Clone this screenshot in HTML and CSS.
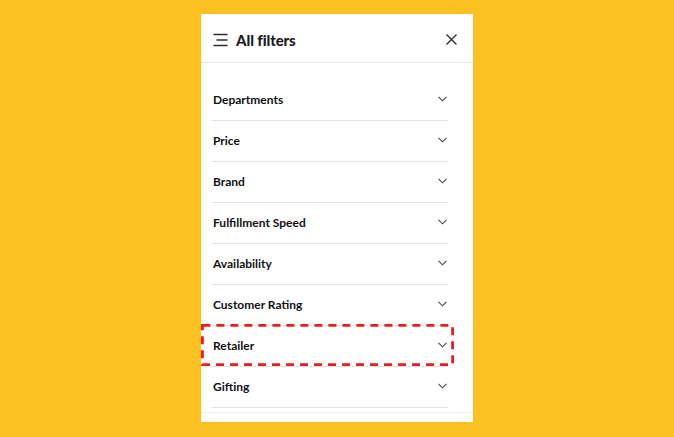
FILE: index.html
```html
<!DOCTYPE html>
<html lang="en">
<head>
    <meta charset="UTF-8">
    <meta name="viewport" content="width=device-width, initial-scale=1.0">
    <title>All filters</title>
    <link rel="stylesheet" href="styles.css">
</head>
<body>

<div class="panel">
    <header class="panel-header">
        <svg class="menu-icon" width="15" height="14" viewBox="0 0 15 14">
            <path d="M0.5 1.5H14.5M3.5 7H14.5M0.5 12.5H14.5" stroke="#2e2f32" stroke-width="1.3" fill="none"/>
        </svg>
        <h1>All filters</h1>
        <svg class="close-icon" width="11" height="11" viewBox="0 0 11 11">
            <path d="M0.5 0.5L10.5 10.5M10.5 0.5L0.5 10.5" stroke="#2e2f32" stroke-width="1.4" fill="none"/>
        </svg>
    </header>

    <ul class="filter-list">
        <li class="filter-row"><span>Departments</span><svg class="chevron" width="9" height="6" viewBox="0 0 9 6"><path d="M0.5 0.8L4.5 4.8L8.5 0.8" stroke="#46474a" stroke-width="1.1" fill="none"/></svg></li>
        <li class="filter-row"><span>Price</span><svg class="chevron" width="9" height="6" viewBox="0 0 9 6"><path d="M0.5 0.8L4.5 4.8L8.5 0.8" stroke="#46474a" stroke-width="1.1" fill="none"/></svg></li>
        <li class="filter-row"><span>Brand</span><svg class="chevron" width="9" height="6" viewBox="0 0 9 6"><path d="M0.5 0.8L4.5 4.8L8.5 0.8" stroke="#46474a" stroke-width="1.1" fill="none"/></svg></li>
        <li class="filter-row"><span>Fulfillment Speed</span><svg class="chevron" width="9" height="6" viewBox="0 0 9 6"><path d="M0.5 0.8L4.5 4.8L8.5 0.8" stroke="#46474a" stroke-width="1.1" fill="none"/></svg></li>
        <li class="filter-row"><span>Availability</span><svg class="chevron" width="9" height="6" viewBox="0 0 9 6"><path d="M0.5 0.8L4.5 4.8L8.5 0.8" stroke="#46474a" stroke-width="1.1" fill="none"/></svg></li>
        <li class="filter-row"><span>Customer Rating</span><svg class="chevron" width="9" height="6" viewBox="0 0 9 6"><path d="M0.5 0.8L4.5 4.8L8.5 0.8" stroke="#46474a" stroke-width="1.1" fill="none"/></svg></li>
        <li class="filter-row"><span>Retailer</span><svg class="chevron" width="9" height="6" viewBox="0 0 9 6"><path d="M0.5 0.8L4.5 4.8L8.5 0.8" stroke="#46474a" stroke-width="1.1" fill="none"/></svg></li>
        <li class="filter-row"><span>Gifting</span><svg class="chevron" width="9" height="6" viewBox="0 0 9 6"><path d="M0.5 0.8L4.5 4.8L8.5 0.8" stroke="#46474a" stroke-width="1.1" fill="none"/></svg></li>
    </ul>

    <div class="panel-footer"></div>

    <!-- highlight round the Retailer row -->
    <svg class="highlight" width="253" height="42" viewBox="0 0 253 42">
        <rect x="1.4" y="1.4" width="250.2" height="39.2" fill="none" stroke="#ee1c1c" stroke-width="2.8" stroke-dasharray="8 6"/>
    </svg>
</div>

</body>
</html>
```

FILE: styles.css
```css
body {
    font-family: 'Lato', 'Noto Sans', sans-serif;
    background-color: #fdc023;
    margin: 0;
    padding: 0;
}

.panel {
    position: relative;
    width: 272px;
    height: 408px;
    margin: 14px auto 0;
    background-color: white;
    display: flex;
    flex-direction: column;
}

.panel-header {
    height: 45px;
    border-bottom: 1px solid #e6e6e6;
    display: flex;
    align-items: center;
    padding: 3px 16px 0 12px;
}

.menu-icon {
    margin-right: 8px;
}

.panel-header h1 {
    margin: 0;
    font-size: 15px;
    font-weight: 900;
    color: #1c1c1e;
    flex: 1;
    letter-spacing: -0.1px;
}

.filter-list {
    list-style: none;
    margin: 0;
    padding: 17px 25px 0 11px;
}

.filter-row {
    height: 38px;
    padding: 0 0 2px 1px;
    border-bottom: 1px solid #e3e3e3;
    display: flex;
    align-items: center;
    justify-content: space-between;
    font-size: 12px;
    font-weight: 700;
    color: #111113;
}

.chevron {
    margin-right: 1px;
}

.panel-footer {
    margin-top: 4px;
    flex: 1;
    border-top: 1px solid #efefef;
}

.highlight {
    position: absolute;
    left: 0;
    top: 310px;
}
```
